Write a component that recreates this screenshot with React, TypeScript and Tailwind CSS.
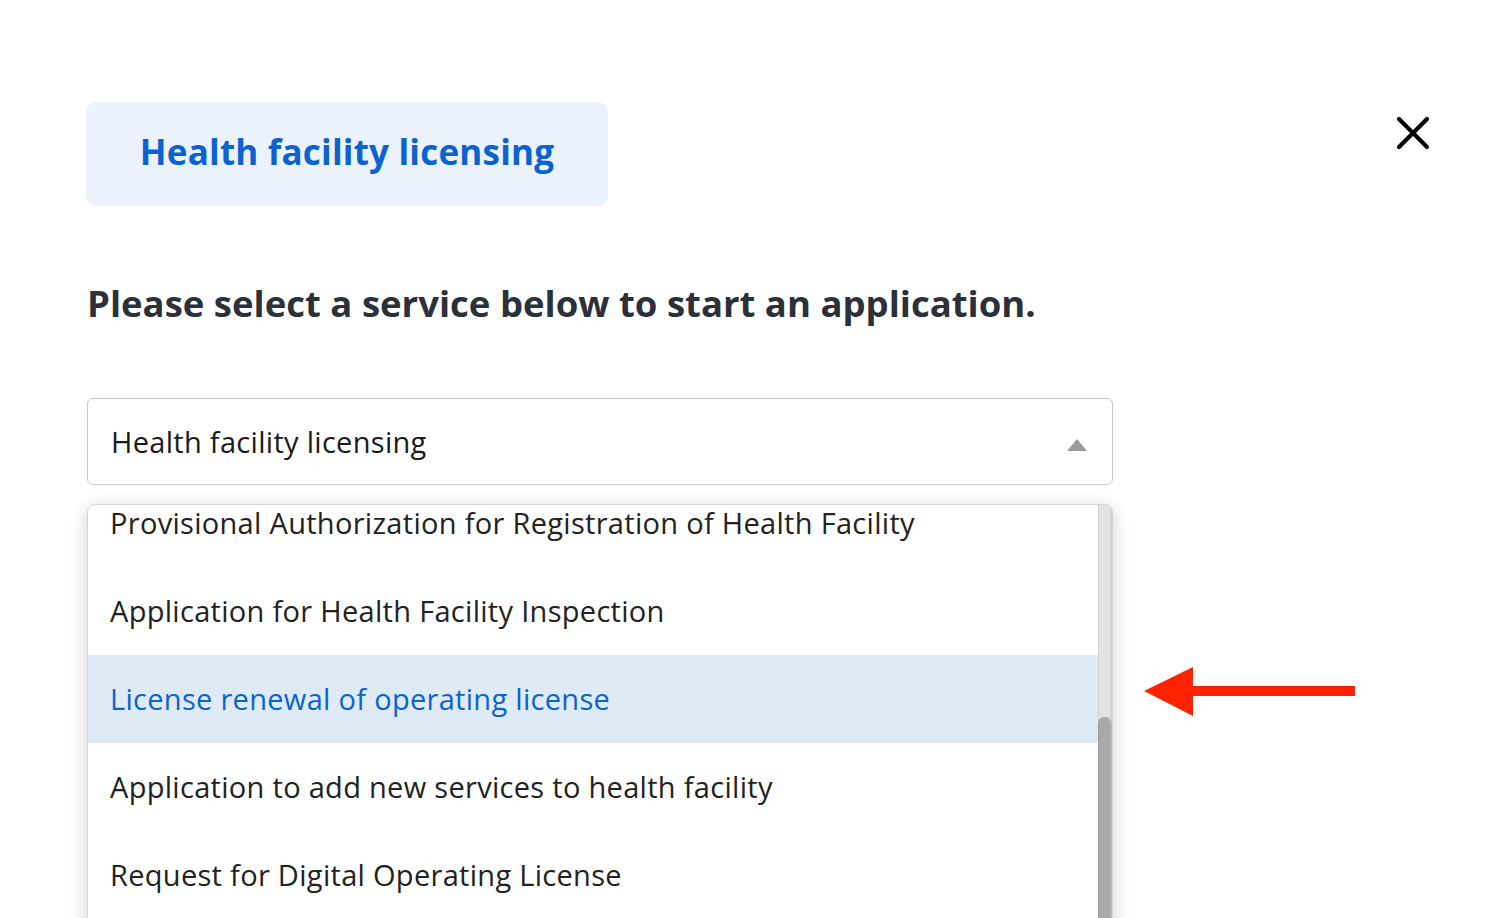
const options = [
  "Provisional Authorization for Registration of Health Facility",
  "Application for Health Facility Inspection",
  "License renewal of operating license",
  "Application to add new services to health facility",
  "Request for Digital Operating License",
];

export default function App() {
  return (
    <div className="relative h-[918px] w-full overflow-hidden bg-white font-['Open_Sans',sans-serif]">
      <div className="flex items-start justify-between pl-[86px] pr-[70px] pt-[102px]">
        <div className="flex h-[104px] w-[522px] items-center justify-center rounded-[10px] bg-[#ebf2fc] pb-[4px]">
          <span className="text-[35px] font-bold tracking-[0.2px] text-[#0b63cf]">
            Health facility licensing
          </span>
        </div>
        <button type="button" className="mt-[14px] text-black">
          <svg width="34" height="34" viewBox="0 0 34 34">
            <path d="M3 3 L31 31 M31 3 L3 31" stroke="#000" strokeWidth="4.2" strokeLinecap="round" />
          </svg>
        </button>
      </div>

      <div className="pl-[87px]">
        <h1 className="mt-[73px] text-[36.5px] font-bold leading-[48px] text-[#2b3039]">
          Please select a service below to start an application.
        </h1>

        <div className="mt-[71px] flex h-[87px] w-[1026px] items-center justify-between rounded-[6px] border border-[#c9c9c9] pl-[23px] pr-[23px]">
          <span className="text-[29px] tracking-[0.3px] text-[#1b1b1b]">Health facility licensing</span>
          <svg width="22" height="14" viewBox="0 0 22 14" className="mr-[1px] mt-[6px]">
            <polygon points="11,1 21,13 1,13" fill="#9a9a9a" />
          </svg>
        </div>

        <div className="mt-[19px] flex h-[440px] w-[1026px] overflow-hidden rounded-t-[8px] border border-[#d6d6d6] shadow-[0_4px_18px_rgba(0,0,0,0.18)]">
          <div className="flex-1 overflow-hidden">
            <ul className="-mt-[26px]">
              {options.map((o, i) => (
                <li
                  key={o}
                  className={
                    i === 2
                      ? "flex h-[88px] items-center bg-[#deebf7] pl-[22px] text-[29px] tracking-[0.3px] text-[#0b63cf]"
                      : "flex h-[88px] items-center pl-[22px] text-[29px] tracking-[0.3px] text-[#222]"
                  }
                >
                  {o}
                </li>
              ))}
            </ul>
          </div>
          <div className="flex w-[14px] flex-col bg-[#e3e3e3] shadow-[inset_1px_0_0_#cfcfcf,inset_-2px_0_0_#d4d4d4]">
            <div className="mt-[212px] flex-1 rounded-t-full bg-[#a9a9a9] shadow-[inset_1px_0_0_#9a9a9a,inset_-2px_0_0_#b8b8b8]" />
          </div>
        </div>
      </div>

      <svg
        className="absolute left-[1142px] top-[665px]"
        width="216"
        height="54"
        viewBox="0 0 216 54"
      >
        <polygon points="2,26 51,2 51,51" fill="#ff2200" />
        <rect x="50" y="21" width="163" height="10" fill="#ff2200" />
      </svg>
    </div>
  );
}
